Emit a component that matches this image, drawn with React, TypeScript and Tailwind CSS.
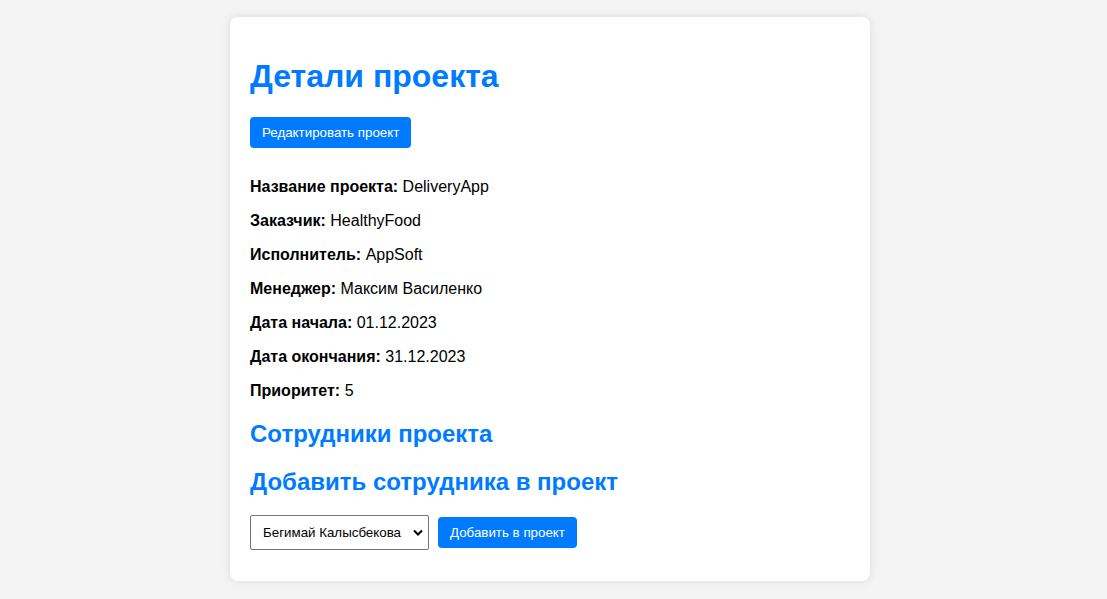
import React from "react";

export default function App() {
  const rows: [string, string][] = [
    ["Название проекта:", "DeliveryApp"],
    ["Заказчик:", "HealthyFood"],
    ["Исполнитель:", "AppSoft"],
    ["Менеджер:", "Максим Василенко"],
    ["Дата начала:", "01.12.2023"],
    ["Дата окончания:", "31.12.2023"],
    ["Приоритет:", "5"],
  ];
  return (
    <div
      className="min-h-screen w-full bg-[#f4f4f4] pt-[17px] pr-[7px] text-black"
      style={{ fontFamily: '"Liberation Sans", Arial, sans-serif' }}
    >
      <div className="mx-auto w-[640px] rounded-[8px] bg-white p-5 shadow-[0_0_10px_rgba(0,0,0,0.1)]">
        <h1 className="mt-[21px] mb-[22px] text-[32px] font-bold leading-[37px] text-[#007bff]">
          Детали проекта
        </h1>
        <div className="mb-[30px]">
          <button className="h-[31px] rounded-[4px] bg-[#007bff] px-[12px] text-[13.33px] text-white">
            Редактировать проект
          </button>
        </div>
        {rows.map(([k, v]) => (
          <p key={k} className="my-4 text-[16px] leading-[18px]">
            <strong className="font-bold">{k}</strong> {v}
          </p>
        ))}
        <h2 className="my-[20px] text-[24px] font-bold leading-[27.6px] text-[#007bff]">
          Сотрудники проекта
        </h2>
        <h2 className="my-[20px] text-[24px] font-bold leading-[27.6px] text-[#007bff]">
          Добавить сотрудника в проект
        </h2>
        <div className="mb-[11px] flex items-center">
          <div className="relative h-[35px] w-[179px]">
            <select className="h-full w-full appearance-none rounded-[2px] border border-[#767676] bg-white pl-[12px] pr-[24px] text-[13.33px] text-black outline-none">
              <option>Бегимай Калысбекова</option>
            </select>
            <svg
              className="pointer-events-none absolute right-[6px] top-[14px]"
              width="10"
              height="7"
              viewBox="0 0 10 7"
            >
              <path d="M1 1.5 L5 5.5 L9 1.5" stroke="#000" strokeWidth="2" fill="none" />
            </svg>
          </div>
          <button className="ml-[9px] h-[31px] rounded-[4px] bg-[#007bff] px-[12px] text-[13.33px] text-white">
            Добавить в проект
          </button>
        </div>
      </div>
    </div>
  );
}
